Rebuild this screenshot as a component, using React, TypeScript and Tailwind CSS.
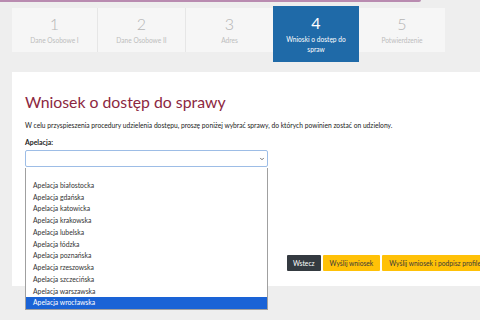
import { ChevronDown } from 'lucide-react';

const steps = [
  { n: '1', label: 'Dane Osobowe I' },
  { n: '2', label: 'Dane Osobowe II' },
  { n: '3', label: 'Adres' },
  { n: '4', label: 'Wnioski o dostęp do spraw', active: true },
  { n: '5', label: 'Potwierdzenie' },
];

const options = [
  '',
  'Apelacja białostocka',
  'Apelacja gdańska',
  'Apelacja katowicka',
  'Apelacja krakowska',
  'Apelacja lubelska',
  'Apelacja łódzka',
  'Apelacja poznańska',
  'Apelacja rzeszowska',
  'Apelacja szczecińska',
  'Apelacja warszawska',
  'Apelacja wrocławska',
];

export default function App() {
  return (
    <div
      className="relative w-[480px] h-[320px] overflow-hidden bg-[#eeeeee]"
      style={{ fontFamily: 'Lato, "Open Sans", sans-serif' }}
    >
      {/* Top accent line */}
      <div className="h-[2px] w-[421px] bg-[#b98bb0] rounded-br-[2px]" />

      {/* Steps */}
      <div className="flex items-start ml-[12px] mt-[4px]">
        {steps.map((s, i) =>
          s.active ? (
            <div
              key={s.n}
              className="w-[86px] h-[56px] bg-[#1f6aa8] text-white flex flex-col items-center pt-[7px]"
            >
              <div className="text-[16px] leading-[20px]">{s.n}</div>
              <div className="text-[6.6px] leading-[10px] text-center px-[12px] mt-[1px]">{s.label}</div>
            </div>
          ) : (
            <div
              key={s.n}
              className={`mt-[2px] h-[44px] bg-[#f6f6f6] flex flex-col items-center pt-[6px] text-[#b5b5b5] ${
                i === 0 ? 'w-[85px]' : i === 4 ? 'w-[86px]' : 'w-[88px]'
              } ${i === 1 || i === 2 ? 'border-l border-[#e6e6e6]' : ''}`}
            >
              <div className="text-[16px] leading-[20px] font-light">{s.n}</div>
              <div className="text-[6.6px] leading-[10px] text-[#bdbdbd] mt-[1px]">{s.label}</div>
            </div>
          )
        )}
      </div>

      {/* Main panel */}
      <div className="ml-[12px] mt-[10px] h-[214px] bg-white pl-[13px] pt-[20px]">
        <h1 className="text-[15.8px] leading-[20px] text-[#8c2741]">Wniosek o dostęp do sprawy</h1>
        <p className="mt-[8px] text-[6.7px] leading-[10px] text-[#222]">
          W celu przyspieszenia procedury udzielenia dostępu, proszę poniżej wybrać sprawy, do których powinien zostać on udzielony.
        </p>
        <div className="mt-[7px] text-[6.9px] leading-[10px] font-bold text-[#222]">Apelacja:</div>
        <div className="mt-[3px] w-[243px] h-[17px] border border-[#9dbde6] rounded-[2px] flex items-center justify-end pr-[2px]">
          <ChevronDown className="w-[6px] h-[6px] text-[#444]" strokeWidth={3} />
        </div>

        <div className="flex gap-[2px] ml-[262px] mt-[88px] whitespace-nowrap text-[6.7px]">
          <button className="h-[16px] px-[6px] bg-[#343a40] text-white rounded-[1px]">Wstecz</button>
          <button className="h-[16px] px-[7px] bg-[#ffc107] text-[#3a3a3a] rounded-[1px]">Wyślij wniosek</button>
          <button className="h-[16px] px-[7px] bg-[#ffc107] text-[#3a3a3a] rounded-[1px]">
            Wyślij wniosek i podpisz profilem zaufanym
          </button>
        </div>
      </div>

      {/* Open native select list */}
      <div className="absolute left-[25px] top-[168px] w-[243px] bg-white border border-[#a0a0a0] border-t-0">
        {options.map((o, i) => (
          <div
            key={i}
            className={`h-[11.75px] leading-[11.75px] pl-[7px] text-[6.8px] ${
              i === options.length - 1 ? 'bg-[#1a63d6] text-white' : 'text-[#333]'
            }`}
          >
            {o}
          </div>
        ))}
      </div>
    </div>
  );
}
